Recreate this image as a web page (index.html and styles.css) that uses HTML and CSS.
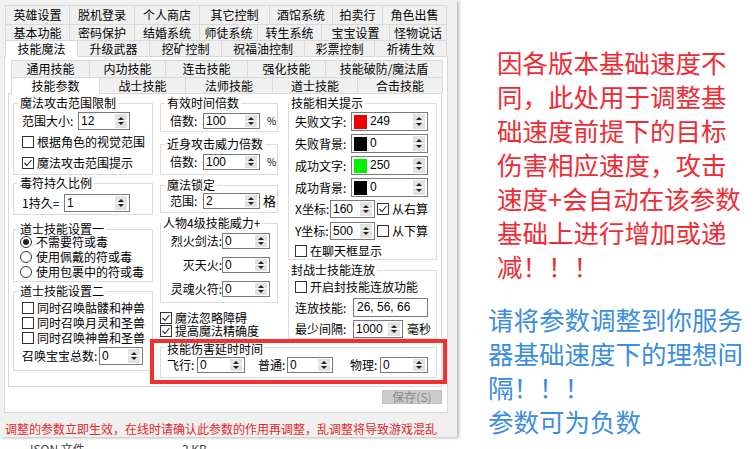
FILE: index.html
```html
<!DOCTYPE html>
<html lang="zh-CN">
<head>
<meta charset="utf-8">
<title>技能魔法</title>
<link rel="stylesheet" href="styles.css">
</head>
<body>
<div class="screen">
  <div class="leftpane">
    <div class="dialog">
      <div class="otabs">
        <div class="tabrow r1">
          <div class="tab w65">英雄设置</div>
          <div class="tab w65">脱机登录</div>
          <div class="tab w65">个人商店</div>
          <div class="tab w70">其它控制</div>
          <div class="tab w63">酒馆系统</div>
          <div class="tab w50">拍卖行</div>
          <div class="tab w64">角色出售</div>
        </div>
        <div class="tabrow r2">
          <div class="tab w65">基本功能</div>
          <div class="tab w65">密码保护</div>
          <div class="tab w65">结婚系统</div>
          <div class="tab w58">师徒系统</div>
          <div class="tab w64">转生系统</div>
          <div class="tab w68">宝宝设置</div>
          <div class="tab w57">怪物说话</div>
        </div>
        <div class="tabrow r3">
          <div class="tab sel w73">技能魔法</div>
          <div class="tab w72">升级武器</div>
          <div class="tab w72">挖矿控制</div>
          <div class="tab w83">祝福油控制</div>
          <div class="tab w70">彩票控制</div>
          <div class="tab w72">祈祷生效</div>
        </div>
      </div>

      <div class="opage">
        <div class="itabs">
          <div class="tabrow i1">
            <div class="tab w79">通用技能</div>
            <div class="tab w76">内功技能</div>
            <div class="tab w82">连击技能</div>
            <div class="tab w78">强化技能</div>
            <div class="tab w117">技能破防/魔法盾</div>
          </div>
          <div class="tabrow i2">
            <div class="tab sel w89">技能参数</div>
            <div class="tab w86">战士技能</div>
            <div class="tab w87">法师技能</div>
            <div class="tab w85">道士技能</div>
            <div class="tab w85">合击技能</div>
          </div>
        </div>

        <div class="ipage">
          <div class="colL">
            <div class="grp gL1">
              <div class="gt">魔法攻击范围限制</div>
              <div class="row">
                <span class="lb lw56">范围大小:</span>
                <div class="spin h18 sw52"><span class="v">12</span><span class="sb"></span></div>
              </div>
              <div class="chk first"><span class="cb"></span>根据角色的视觉范围</div>
              <div class="chk"><span class="cb"><svg viewBox="0 0 10 10" width="10" height="10"><path d="M1.5 5 L4 7.5 L8.5 2" fill="none" stroke="#222" stroke-width="1.1"/></svg></span>魔法攻击范围提示</div>
            </div>

            <div class="grp gL2">
              <div class="gt">毒符持久比例</div>
              <div class="row">
                <span class="lb lw42">1持久=</span>
                <div class="spin h18 sw66"><span class="v">1</span><span class="sb"></span></div>
              </div>
            </div>

            <div class="grp gL3">
              <div class="gt">道士技能设置一</div>
              <div class="rad first"><span class="rd on"></span>不需要符或毒</div>
              <div class="rad"><span class="rd"></span>使用佩戴的符或毒</div>
              <div class="rad"><span class="rd"></span>使用包裹中的符或毒</div>
            </div>

            <div class="grp gL4">
              <div class="gt">道士技能设置二</div>
              <div class="chk first"><span class="cb"></span>同时召唤骷髅和神兽</div>
              <div class="chk"><span class="cb"></span>同时召唤月灵和圣兽</div>
              <div class="chk"><span class="cb"></span>同时召唤神兽和圣兽</div>
              <div class="row">
                <span class="lb lw77">召唤宝宝总数:</span>
                <div class="spin h18 sw44"><span class="v">0</span><span class="sb"></span></div>
              </div>
            </div>
          </div>

          <div class="colRight">
            <div class="cols">
              <div class="colM">
                <div class="grp gM1">
                  <div class="gt">有效时间倍数</div>
                  <div class="row">
                    <span class="lb lw33">倍数:</span>
                    <div class="spin h16 sw57"><span class="v">100</span><span class="sb"></span></div>
                    <span class="pct">%</span>
                  </div>
                </div>
                <div class="grp gM2">
                  <div class="gt">近身攻击威力倍数</div>
                  <div class="row">
                    <span class="lb lw33">倍数:</span>
                    <div class="spin h16 sw57"><span class="v">100</span><span class="sb"></span></div>
                    <span class="pct">%</span>
                  </div>
                </div>
                <div class="grp gM3">
                  <div class="gt">魔法锁定</div>
                  <div class="row">
                    <span class="lb lw33">范围:</span>
                    <div class="spin h16 sw57"><span class="v">2</span><span class="sb"></span></div>
                    <span class="unit">格</span>
                  </div>
                </div>
                <div class="grp gM4">
                  <div class="gt">人物4级技能威力+</div>
                  <div class="row">
                    <span class="lb lw54 rt">烈火剑法:</span>
                    <div class="spin h16 sw48"><span class="v">0</span><span class="sb"></span></div>
                  </div>
                  <div class="row">
                    <span class="lb lw54 rt">灭天火:</span>
                    <div class="spin h16 sw48"><span class="v">0</span><span class="sb"></span></div>
                  </div>
                  <div class="row">
                    <span class="lb lw54 rt">灵魂火符:</span>
                    <div class="spin h16 sw48"><span class="v">0</span><span class="sb"></span></div>
                  </div>
                </div>
                <div class="chk mchk first"><span class="cb"><svg viewBox="0 0 10 10" width="10" height="10"><path d="M1.5 5 L4 7.5 L8.5 2" fill="none" stroke="#222" stroke-width="1.1"/></svg></span>魔法忽略障碍</div>
                <div class="chk mchk"><span class="cb"><svg viewBox="0 0 10 10" width="10" height="10"><path d="M1.5 5 L4 7.5 L8.5 2" fill="none" stroke="#222" stroke-width="1.1"/></svg></span>提高魔法精确度</div>
              </div>

              <div class="colR">
                <div class="grp gR1">
                  <div class="gt">技能相关提示</div>
                  <div class="row crow">
                    <span class="lb lw56">失败文字:</span>
                    <div class="spin h19 sw77"><span class="swatch sw-red"></span><span class="v">249</span><span class="sb"></span></div>
                  </div>
                  <div class="row crow">
                    <span class="lb lw56">失败背景:</span>
                    <div class="spin h19 sw77"><span class="swatch sw-black"></span><span class="v">0</span><span class="sb"></span></div>
                  </div>
                  <div class="row crow">
                    <span class="lb lw56">成功文字:</span>
                    <div class="spin h19 sw77"><span class="swatch sw-green"></span><span class="v">250</span><span class="sb"></span></div>
                  </div>
                  <div class="row crow">
                    <span class="lb lw56">成功背景:</span>
                    <div class="spin h19 sw77"><span class="swatch sw-black"></span><span class="v">0</span><span class="sb"></span></div>
                  </div>
                  <div class="row xrow">
                    <span class="lb lw35">X坐标:</span>
                    <div class="spin h18 sw45"><span class="v">160</span><span class="sb"></span></div>
                    <span class="cb side"><svg viewBox="0 0 10 10" width="10" height="10"><path d="M1.5 5 L4 7.5 L8.5 2" fill="none" stroke="#222" stroke-width="1.1"/></svg></span><span class="lb">从右算</span>
                  </div>
                  <div class="row yrow">
                    <span class="lb lw35">Y坐标:</span>
                    <div class="spin h18 sw45"><span class="v">500</span><span class="sb"></span></div>
                    <span class="cb side"></span><span class="lb">从下算</span>
                  </div>
                  <div class="chk rchk"><span class="cb"></span>在聊天框显示</div>
                </div>

                <div class="grp gR2">
                  <div class="gt">封战士技能连放</div>
                  <div class="chk rchk"><span class="cb"></span>开启封技能连放功能</div>
                  <div class="row lrow">
                    <span class="lb lw58">连放技能:</span>
                    <div class="edit">26, 56, 66</div>
                  </div>
                  <div class="row irow">
                    <span class="lb lw58">最少间隔:</span>
                    <div class="spin h18 sw50"><span class="v">1000</span><span class="sb"></span></div>
                    <span class="ms">毫秒</span>
                  </div>
                </div>
              </div>
            </div>

            <div class="grp gDelay">
              <div class="gt">技能伤害延时时间</div>
              <div class="row">
                <span class="lb lw30">飞行:</span>
                <div class="spin h16 sw48"><span class="v">0</span><span class="sb"></span></div>
                <span class="lb lw29 gap13">普通:</span>
                <div class="spin h16 sw46"><span class="v">0</span><span class="sb"></span></div>
                <span class="lb lw30 gap17">物理:</span>
                <div class="spin h16 sw48"><span class="v">0</span><span class="sb"></span></div>
              </div>
            </div>
          </div>
        </div>

        <div class="btnrow"><div class="btn-save">保存(S)</div></div>
      </div>

      <div class="status">调整的参数立即生效，在线时请确认此参数的作用再调整，乱调整将导致游戏混乱</div>
    </div>
    <div class="filerow"><span class="fname">JSON 文件</span><span>2 KB</span></div>
  </div>

  <div class="notes">
    <div class="note-red">因各版本基础速度不<br>同，此处用于调整基<br>础速度前提下的目标<br>伤害相应速度，攻击<br>速度+会自动在该参数<br>基础上进行增加或递<br>减！！！</div>
    <div class="note-blue">请将参数调整到你服务<br>器基础速度下的理想间<br>隔！！！<br>参数可为负数</div>
  </div>
</div>
</body>
</html>
```

FILE: styles.css
```css
* { box-sizing: border-box; }
html, body { margin: 0; padding: 0; }
body {
  width: 755px;
  height: 449px;
  overflow: hidden;
  background: #fff;
  font-family: "Noto Sans CJK SC", "Noto Sans", sans-serif;
  font-size: 12px;
  color: #000;
}
.screen { display: flex; height: 449px; }
.leftpane { width: 460px; flex: none; }

.dialog {
  width: 457px;
  height: 437px;
  background: #f0f0f0;
  padding-top: 5px;
  box-shadow: 2px 1px 3px rgba(0, 0, 0, 0.28);
  display: flex;
  flex-direction: column;
}

/* tabs */
.tabrow { display: flex; }
.tab {
  flex: none;
  border: 1px solid #d9d9d9;
  border-left: none;
  border-bottom: none;
  background: #f0f0f0;
  display: flex;
  align-items: center;
  justify-content: center;
  line-height: 14px;
  white-space: nowrap;
}
.tab:first-child { border-left: 1px solid #d9d9d9; }
.tab.sel {
  background: #fff;
  margin-bottom: -1px;
  position: relative;
  z-index: 1;
}
.otabs { margin-left: 5px; width: 442px; }
.r1 { height: 19px; }
.r2 { height: 16px; }
.r3 { height: 16px; }
.itabs { margin: 3px 0 0 3px; width: 432px; }
.i1 { height: 17px; }
.i2 { height: 16px; }

.w50 { width: 50px; } .w57 { width: 57px; } .w58 { width: 58px; }
.w63 { width: 63px; } .w64 { width: 64px; } .w65 { width: 65px; }
.w68 { width: 68px; } .w70 { width: 70px; } .w72 { width: 72px; }
.w73 { width: 73px; } .w76 { width: 76px; } .w78 { width: 78px; }
.w79 { width: 79px; } .w82 { width: 82px; } .w83 { width: 83px; }
.w85 { width: 85px; } .w86 { width: 86px; } .w87 { width: 87px; }
.w89 { width: 89px; } .w117 { width: 117px; }

/* pages */
.opage {
  margin-left: 4px;
  width: 444px;
  height: 357px;
  background: #fff;
  border: 1px solid #d9d9d9;
  padding: 0 0 8px 3px;
}
.ipage {
  width: 434px;
  height: 294px;
  background: #fff;
  border: 1px solid #d9d9d9;
  padding: 0 4px 8px 4px;
  display: flex;
  align-items: flex-start;
}
.colL { width: 140px; flex: none; }
.colRight { width: 277px; margin-left: 7px; flex: none; }
.cols { display: flex; align-items: flex-start; }
.colM { width: 118px; flex: none; }
.colR { width: 149px; margin-left: 10px; flex: none; }

/* group boxes */
.grp { border: 1px solid #dcdcdc; background: #fff; }
.gt {
  display: block;
  width: max-content;
  line-height: 12px;
  margin: -7px 0 0 4px;
  padding: 0 2px;
  background: #fff;
  white-space: nowrap;
}
.gM4 .gt, .gR1 .gt, .gR2 .gt { margin-left: 0; }

.row { display: flex; align-items: center; }
.lb { flex: none; line-height: 14px; white-space: nowrap; }
.rt { text-align: right; }
.lw29 { width: 29px; } .lw30 { width: 30px; } .lw33 { width: 33px; }
.lw35 { width: 35px; } .lw42 { width: 42px; } .lw54 { width: 54px; }
.lw56 { width: 56px; } .lw58 { width: 58px; } .lw77 { width: 77px; }

/* spin boxes */
.spin {
  flex: none;
  display: flex;
  align-items: center;
  border: 1px solid #7a7a7a;
  background: #fff;
}
.h16 { height: 16px; } .h18 { height: 18px; } .h19 { height: 19px; }
.sw44 { width: 44px; } .sw45 { width: 45px; } .sw46 { width: 46px; }
.sw48 { width: 48px; } .sw50 { width: 50px; } .sw52 { width: 52px; }
.sw57 { width: 57px; } .sw66 { width: 66px; } .sw77 { width: 77px; }
.spin .v {
  flex: 1;
  padding-left: 2px;
  font-family: "Liberation Sans", Arial, sans-serif;
  font-size: 12px;
  line-height: 13px;
  white-space: nowrap;
  overflow: hidden;
}
.sb {
  flex: none;
  width: 12px;
  align-self: stretch;
  margin: 1px 2px 1px 0;
  background: linear-gradient(to bottom, #e1e1e1 calc(50% - 0.5px), #fafafa calc(50% - 0.5px), #fafafa calc(50% + 0.5px), #e1e1e1 calc(50% + 0.5px));
  display: flex;
  flex-direction: column;
  justify-content: space-evenly;
  align-items: center;
}
.sb::before {
  content: "";
  border-left: 3px solid transparent;
  border-right: 3px solid transparent;
  border-bottom: 3px solid #222;
}
.sb::after {
  content: "";
  border-left: 3px solid transparent;
  border-right: 3px solid transparent;
  border-top: 3px solid #222;
}
.swatch { flex: none; width: 13px; height: 14px; margin: 0 1px 0 2px; }
.sw-red { background: #f00000; }
.sw-black { background: #000; }
.sw-green { background: #00f000; }

.edit {
  flex: none;
  width: 75px;
  height: 19px;
  border: 1px solid #7a7a7a;
  background: #fff;
  padding-left: 3px;
  font-family: "Liberation Sans", Arial, sans-serif;
  font-size: 12px;
  line-height: 17px;
  white-space: nowrap;
}

/* checkboxes and radios */
.chk, .rad {
  display: flex;
  align-items: center;
  line-height: 12px;
  white-space: nowrap;
}
.cb {
  flex: none;
  width: 12px;
  height: 12px;
  border: 1px solid #333;
  background: #fff;
  display: flex;
  margin-right: 3px;
}
.cb svg { display: block; }
.rd {
  flex: none;
  width: 12px;
  height: 12px;
  border: 1px solid #333;
  border-radius: 50%;
  background: #fff;
  margin-right: 4px;
  display: flex;
  align-items: center;
  justify-content: center;
}
.rd.on::after {
  content: "";
  width: 6px;
  height: 6px;
  border-radius: 50%;
  background: #222;
}

/* left column groups */
.gL1 { margin-top: 9px; padding-bottom: 1px; }
.gL1 .row { margin: 3px 0 0 8px; }
.gL1 .chk { height: 21px; margin-left: 8px; }
.gL1 .chk.first { margin-top: 1px; }

.gL2 { margin-top: 8px; padding-bottom: 2px; }
.gL2 .row { margin: 5px 0 0 8px; }

.gL3 { margin-top: 14px; padding-bottom: 3px; }
.gL3 .rad { height: 15px; margin-left: 6px; }
.gL3 .rad.first { margin-top: -1px; }
.gL3 .rad:last-child { margin-bottom: -1px; }

.gL4 { margin-top: 9px; padding-bottom: 5px; }
.gL4 .chk { height: 15px; margin-left: 8px; }
.gL4 .chk.first { margin-top: 3px; }
.gL4 .row { margin: 2px 0 0 8px; }

/* middle column */
.gM1 { margin-top: 9px; padding-bottom: 2px; }
.gM2 { margin-top: 12px; padding-bottom: 4px; }
.gM1 .row, .gM2 .row { margin: 4px 0 0 9px; }
.gM3 { margin-top: 10px; padding-bottom: 3px; }
.gM3 .row { margin: 2px 0 0 9px; }
.pct { margin-left: 7px; font-size: 10px; line-height: 12px; }
.unit { margin-left: 3px; line-height: 14px; font-size: 13px; }
.gM4 { margin-top: 10px; padding-bottom: 5px; }
.gM4 .row { margin: 8px 0 0 7px; }
.gM4 .row:nth-child(2) { margin-top: 4px; }
.mchk { height: 13px; }
.mchk.first { margin-top: 8px; }

/* right column */
.gR1 { margin-top: 9px; padding-bottom: 1px; }
.gR1 .row { margin-left: 6px; }
.crow { margin-top: 3px; }
.xrow { margin-top: 3px; }
.yrow { margin-top: 4px; }
.cb.side { margin: 0 3px 0 2px; }
.rchk { height: 14px; margin: 4px 0 0 6px; }
.gR2 { margin-top: 10px; }
.gR2 .row { margin-left: 6px; }
.lrow { margin-top: 4px; }
.irow { margin-top: 3px; }
.ms { margin-left: 4px; line-height: 14px; }

/* delay group with red annotation */
.gDelay { margin-top: 8px; padding-bottom: 4px; position: relative; }
.gDelay .gt { margin-top: -5px; }
.gDelay .row { margin: 2px 0 0 6px; }
.gap13 { margin-left: 13px; }
.gap17 { margin-left: 17px; }
.gDelay::after {
  content: "";
  position: absolute;
  top: -9px;
  left: -11px;
  right: -11px;
  bottom: -7px;
  border: 4px solid #f2302f;
  pointer-events: none;
}

/* button + status */
.btnrow { display: flex; justify-content: flex-end; margin: 3px 5px 0 0; }
.btn-save {
  width: 60px;
  height: 14px;
  background: #cccccc;
  border: 1px solid #c0c0c0;
  color: #8a8a8a;
  line-height: 12px;
  text-align: center;
  white-space: nowrap;
}
.status {
  height: 24px;
  padding: 9px 0 0 5px;
  line-height: 14px;
  color: #e5282a;
  white-space: nowrap;
}
.filerow {
  display: flex;
  margin-top: 5px;
  padding-left: 27px;
  line-height: 14px;
  color: #444;
  white-space: nowrap;
}
.fname { width: 155px; }

/* right notes */
.notes {
  flex: 1;
  padding-top: 45px;
  font-size: 25.5px;
  line-height: 34px;
  white-space: nowrap;
}
.note-red { color: #ef2b36; padding-left: 37px; }
.note-blue { color: #3b8de0; padding-left: 28px; margin-top: 19px; }
```
